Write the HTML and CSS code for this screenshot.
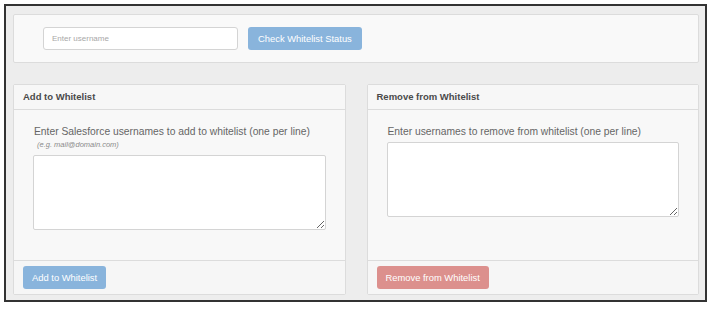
FILE: index.html
```html
<!DOCTYPE html>
<html lang="en">
<head>
    <meta charset="UTF-8">
    <meta name="viewport" content="width=device-width, initial-scale=1.0">
    <title>Whitelist Manager</title>
    <link rel="stylesheet" href="styles.css">
</head>
<body>
    <div class="frame">
        <div class="check-bar">
            <input type="text" class="user-input" placeholder="Enter username">
            <button class="btn btn-primary" disabled>Check Whitelist Status</button>
        </div>

        <div class="panels">
            <div class="panel">
                <div class="panel-heading">Add to Whitelist</div>
                <div class="panel-body">
                    <label class="field-label">Enter Salesforce usernames to add to whitelist (one per line)</label>
                    <span class="hint">(e.g. mail@domain.com)</span>
                    <textarea class="user-list"></textarea>
                </div>
                <div class="panel-footer">
                    <button class="btn btn-primary" disabled>Add to Whitelist</button>
                </div>
            </div>

            <div class="panel">
                <div class="panel-heading">Remove from Whitelist</div>
                <div class="panel-body">
                    <label class="field-label">Enter usernames to remove from whitelist (one per line)</label>
                    <textarea class="user-list"></textarea>
                </div>
                <div class="panel-footer">
                    <button class="btn btn-danger" disabled>Remove from Whitelist</button>
                </div>
            </div>
        </div>
    </div>
</body>
</html>
```

FILE: styles.css
```css
body { margin: 0; background-color: #ffffff; font-family: "Liberation Sans", Arial, sans-serif; color: #555; }

.frame {
    margin: 4px;
    height: 298px;
    box-sizing: border-box;
    border: 2px solid #333;
    background-color: #ededed;
    padding: 8px 6px 5px 7px;
    display: flex;
    flex-direction: column;
}

.check-bar {
    height: 49px;
    box-sizing: border-box;
    border: 1px solid #dcdcdc;
    border-radius: 2px;
    background-color: #f9f9f9;
    padding: 12px 29px;
    display: flex;
    gap: 10px;
    margin-bottom: 21px;
}
.user-input {
    width: 195px;
    height: 23px;
    box-sizing: border-box;
    border: 1px solid #d4d4d4;
    border-radius: 3px;
    padding: 0 8px;
    font-family: inherit;
    font-size: 8px;
    outline: none;
}
.user-input::placeholder { color: #a8a8a8; }

.btn {
    height: 23px;
    border: none;
    border-radius: 3px;
    padding: 0 9px;
    color: #ffffff;
    font-family: inherit;
    font-size: 9.4px;
    cursor: not-allowed;
}
.btn-primary { background-color: #89b4dc; }
.btn-danger { background-color: #dc908d; }
.check-bar .btn { padding: 0 10px; }

.panels {
    flex: 1;
    display: grid;
    grid-template-columns: 1fr 1fr;
    gap: 21px;
}
.panel {
    display: flex;
    flex-direction: column;
    border: 1px solid #dcdcdc;
    border-radius: 2px;
    background-color: #f8f8f8;
}
.panel-heading {
    height: 24px;
    line-height: 24px;
    padding: 0 9px;
    border-bottom: 1px solid #dcdcdc;
    background-color: #f7f7f7;
    font-size: 9.5px;
    font-weight: bold;
    color: #4a4a4a;
}
.panel-body {
    flex: 1;
    padding: 15px 19px 0 19px;
    display: flex;
    flex-direction: column;
    align-items: flex-start;
}
.field-label {
    font-size: 10.3px;
    line-height: 14px;
    color: #666;
    margin: 0 0 3px 1px;
}
.hint {
    font-size: 7.5px;
    font-style: italic;
    color: #8a8a8a;
    line-height: 10px;
    margin: -2px 0 5px 4px;
}
.user-list {
    width: 100%;
    height: 75px;
    box-sizing: border-box;
    border: 1px solid #d4d4d4;
    border-radius: 2px;
    background-color: #ffffff;
    margin: 0;
}
.panel-footer {
    padding: 5px 9px 5px 9px;
    border-top: 1px solid #dcdcdc;
    background-color: #f6f6f6;
}
```
